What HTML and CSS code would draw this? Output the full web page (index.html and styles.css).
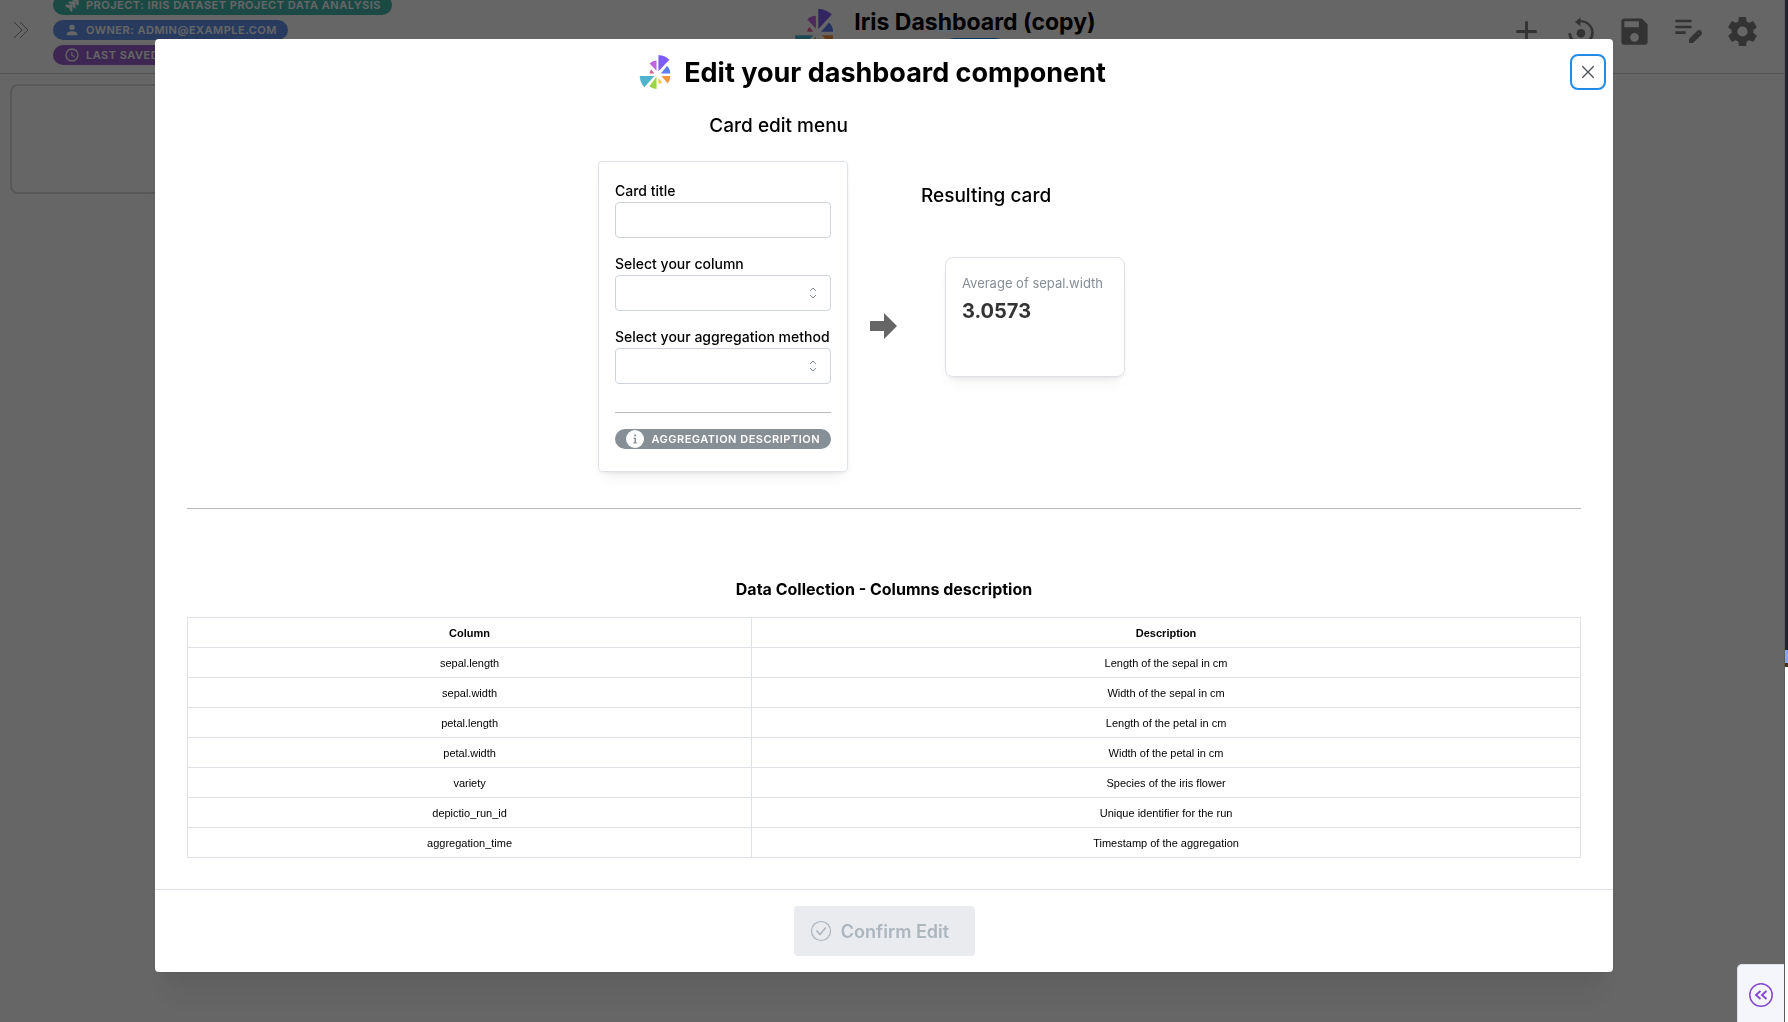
FILE: index.html
```html
<!DOCTYPE html>
<html lang="en">
<head>
<meta charset="utf-8">
<meta name="viewport" content="width=device-width, initial-scale=1">
<title>Iris Dashboard (copy)</title>
<link rel="stylesheet" href="styles.css">
</head>
<body>
<svg class="defs" aria-hidden="true">
  <symbol id="logo" viewBox="106 44 97 107">
    <path fill="#7f5df5" d="M165 95V46Q184 47 198 60Z"/>
    <path fill="#5f7ef6" d="M172 102 191 79Q201 88 201 102Z"/>
    <path fill="#f3953f" d="M174 110H201Q201 123 193 132Z"/>
    <path fill="#f8c63d" d="M165 116 176 129Q171 133 165 133Z"/>
    <path fill="#9dd447" d="M159 112V149Q147 149 137 141Z"/>
    <path fill="#52b4cc" d="M153 110H108Q109 130 122 144Z"/>
    <path fill="#dc6292" d="M153 102H138Q138 95 143 90Z"/>
    <path fill="#c064e0" d="M159 94V63Q147 63 138 72Z"/>
  </symbol>
</svg>

<div class="window">
  <div class="app">
    <header class="topbar">
      <button class="icon-btn expand" aria-label="Expand sidebar">
        <svg width="24" height="24" viewBox="0 0 24 24" fill="none" stroke="#868e96" stroke-width="1"><path d="M5 4l8 8-8 8M11 4l8 8-8 8"/></svg>
      </button>
      <div class="tags">
        <span class="badge teal"><svg viewBox="0 0 24 24" fill="currentColor"><path d="M11.5 2c0 2.4 2 4.400 4.350 4.400h1.780v1.700c0 2.400 1.940 4.340 4.340 4.350V2.840a.84.84 0 0 0-.84-.84H11.500M6.770 6.800c0 2.400 1.960 4.350 4.350 4.350h1.780v1.720c0 2.400 1.950 4.340 4.350 4.340V7.630a.84.84 0 0 0-.83-.83H6.770M2 11.600c0 2.400 1.950 4.340 4.350 4.340h1.780v1.720c.01 2.390 1.950 4.330 4.340 4.340v-9.570a.84.84 0 0 0-.84-.83H2Z"/></svg>Project: Iris Dataset Project Data Analysis</span>
        <span class="badge blue"><svg viewBox="0 0 24 24" fill="currentColor"><path d="M12 4a4 4 0 0 1 4 4 4 4 0 0 1-4 4 4 4 0 0 1-4-4 4 4 0 0 1 4-4m0 10c4.420 0 8 1.790 8 4v2H4v-2c0-2.210 3.580-4 8-4Z"/></svg>Owner: admin@example.com</span>
        <span class="badge purple"><svg viewBox="0 0 24 24" fill="none" stroke="currentColor" stroke-width="2"><circle cx="12" cy="12" r="9"/><path d="M11.700 7v5.500l4.500 2.300" stroke-width="1.600"/></svg>Last saved: 2025-06-12 14:30</span>
      </div>
      <div class="heading">
        <svg class="heading-logo" viewBox="0 0 97 107"><use href="#logo"/></svg>
        <div class="heading-text">
          <h1>Iris Dashboard (copy)</h1>
          <span class="badge status"></span>
        </div>
      </div>
      <nav class="actions">
        <button class="icon-btn" aria-label="Add component"><svg viewBox="0 0 24 24"><path d="M19 13h-6v6h-2v-6H5v-2h6V5h2v6h6v2Z"/></svg></button>
        <button class="icon-btn" aria-label="Reset"><svg viewBox="0 0 24 24"><path d="M12 5.700V8.400L8.200 5.400 12 2.400V4.300A8.700 8.700 0 1 1 3.700 13H5.500A6.900 6.900 0 1 0 12 5.700Z"/><circle cx="12.300" cy="13.200" r="3"/></svg></button>
        <button class="icon-btn" aria-label="Save"><svg viewBox="0 0 24 24"><path d="M15 9H5V5h10m-3 14a3 3 0 0 1-3-3 3 3 0 0 1 3-3 3 3 0 0 1 3 3 3 3 0 0 1-3 3m5-16H5c-1.110 0-2 .9-2 2v14a2 2 0 0 0 2 2h14a2 2 0 0 0 2-2V7l-4-4Z"/></svg></button>
        <button class="icon-btn" aria-label="Edit notes"><svg viewBox="575 45 105 105"><path d="M588 62h49v8h-49zM588 80h49v8h-49zM588 97h31v8h-31z"/><path fill-rule="evenodd" d="M629 132V120L653 96Q659 90 665 96L667 98Q670 103 666 107L641 132ZM656 103l2 2 2-2-2-2Z"/></svg></button>
        <button class="icon-btn" aria-label="Settings"><svg viewBox="0 0 24 24"><path d="M12 15.500A3.500 3.500 0 0 1 8.500 12 3.500 3.500 0 0 1 12 8.500a3.500 3.500 0 0 1 3.500 3.500 3.500 3.500 0 0 1-3.500 3.500m7.430-2.530c.04-.32.07-.64.07-.97 0-.33-.03-.66-.07-1l2.110-1.630c.19-.15.24-.42.12-.64l-2-3.460c-.12-.22-.39-.31-.61-.22l-2.490 1c-.52-.39-1.060-.73-1.690-.98l-.37-2.650A.506.506 0 0 0 14 2h-4c-.25 0-.46.18-.5.42l-.37 2.650c-.63.25-1.170.59-1.690.98l-2.490-1c-.22-.09-.49 0-.61.22l-2 3.460c-.13.22-.07.49.12.64L4.570 11c-.04.34-.07.67-.07 1 0 .33.03.65.07.97l-2.110 1.660c-.19.15-.25.42-.12.64l2 3.460c.12.22.39.3.61.22l2.490-1.010c.52.4 1.060.74 1.690.99l.37 2.650c.04.24.25.42.5.42h4c.25 0 .46-.18.5-.42l.37-2.650c.63-.26 1.170-.59 1.690-.99l2.490 1.010c.22.08.49 0 .61-.22l2-3.460c.12-.22.07-.49-.12-.64l-2.110-1.660Z"/></svg></button>
      </nav>
    </header>
    <main class="board"><div class="tile"></div></main>
  </div>
  <div class="edge"></div>
</div>

<div class="overlay">
  <section class="modal" role="dialog" aria-modal="true" aria-labelledby="modal-title">
    <header class="modal-head">
      <div class="modal-title">
        <svg class="modal-logo" viewBox="0 0 97 107"><use href="#logo"/></svg>
        <h2 id="modal-title">Edit your dashboard component</h2>
      </div>
      <button class="close" aria-label="Close"><svg width="16" height="16" viewBox="0 0 16 16" fill="none" stroke="#495057" stroke-width="1.300"><path d="M2.300 2.300l11.400 11.400M13.700 2.300L2.300 13.700"/></svg></button>
    </header>

    <div class="modal-body">
      <div class="editor">
        <div class="menu">
          <h3>Card edit menu</h3>
          <form class="panel">
            <div class="field">
              <label for="card-title">Card title</label>
              <input id="card-title" type="text">
            </div>
            <div class="field">
              <label for="card-column">Select your column</label>
              <div class="select">
                <select id="card-column"><option></option><option>sepal.length</option><option>sepal.width</option></select>
                <svg viewBox="0 0 12 16"><path d="M3 6l3-3 3 3M3 10l3 3 3-3"/></svg>
              </div>
            </div>
            <div class="field">
              <label for="card-method">Select your aggregation method</label>
              <div class="select">
                <select id="card-method"><option></option><option>average</option><option>count</option></select>
                <svg viewBox="0 0 12 16"><path d="M3 6l3-3 3 3M3 10l3 3 3-3"/></svg>
              </div>
            </div>
            <hr>
            <span class="badge gray"><svg viewBox="0 0 18 18"><circle cx="9" cy="9" r="9" fill="#fff"/><path d="M8.200 4.500h1.800v1.800H8.200zM7.500 7.800H10v4.700h1v1H7.300v-1h1.200V8.800h-1z" fill="#868e96"/></svg>Aggregation description</span>
          </form>
        </div>
        <svg class="arrow" viewBox="0 0 27 26" fill="#666"><path d="M0 8h14V0l13 13-13 13v-8H0z"/></svg>
        <div class="result">
          <h3>Resulting card</h3>
          <div class="stat">
            <span class="stat-label">Average of sepal.width</span>
            <strong>3.0573</strong>
          </div>
        </div>
      </div>

      <hr class="divider">

      <h4 id="columns-title">Data Collection - Columns description</h4>
      <table aria-labelledby="columns-title">
        <thead><tr><th class="name">Column</th><th>Description</th></tr></thead>
        <tbody>
          <tr><td>sepal.length</td><td>Length of the sepal in cm</td></tr>
          <tr><td>sepal.width</td><td>Width of the sepal in cm</td></tr>
          <tr><td>petal.length</td><td>Length of the petal in cm</td></tr>
          <tr><td>petal.width</td><td>Width of the petal in cm</td></tr>
          <tr><td>variety</td><td>Species of the iris flower</td></tr>
          <tr><td>depictio_run_id</td><td>Unique identifier for the run</td></tr>
          <tr><td>aggregation_time</td><td>Timestamp of the aggregation</td></tr>
        </tbody>
      </table>
    </div>

    <footer class="modal-foot">
      <button class="confirm" disabled>
        <svg width="22" height="22" viewBox="0 0 22 22" fill="none" stroke="currentColor"><circle cx="11" cy="11" r="9.500" stroke-width="1.200"/><path d="M6.500 10.500l3.500 4 5.800-7" stroke-width="1.600"/></svg>
        Confirm Edit
      </button>
    </footer>
  </section>
</div>

<button class="drawer" aria-label="Open debug menu">
  <svg width="24" height="24" viewBox="0 0 24 24" fill="none" stroke="#8549cc"><circle cx="12" cy="12" r="11.200" stroke-width="1.500"/><path d="M11.500 8l-4.500 4 4.500 4M17.500 8L13 12l4.500 4" stroke-width="1.900"/></svg>
</button>
</body>
</html>
```
FILE: styles.css
```css
* { box-sizing: border-box; }

body {
  margin: 0;
  font-family: Inter, "Liberation Sans", sans-serif;
  color: #000;
  background: #fff;
}

button, input, select { font: inherit; }
h1, h2, h3, h4 { margin: 0; }
.defs { display: none; }

/* Page behind the dialog */
.window { display: flex; height: 100vh; overflow: hidden; }
.app { flex: 1; min-width: 0; }
.edge {
  position: relative;
  z-index: 3;
  width: 4px;
  border-left: 1px solid #5c5c5c;
  background: linear-gradient(#22252f 650px, #8ca4f0 650px 663px, #4a3218 663px 667px, #fff 667px);
}

.topbar {
  display: grid;
  grid-template-columns: 53px 1fr auto 1fr;
  align-items: center;
  height: 74px;
  padding-bottom: 13px;
  border-bottom: 1px solid #d0d3d8;
}
.topbar > * { max-height: 60px; }
.icon-btn {
  display: flex;
  padding: 0;
  border: 0;
  background: none;
}
.expand { padding-left: 9px; }

.tags {
  display: flex;
  flex-direction: column;
  justify-content: center;
  align-items: flex-start;
  gap: 5px;
}
.badge {
  display: inline-flex;
  flex: none;
  align-items: center;
  gap: 6px;
  height: 20px;
  padding: 0 11px;
  border-radius: 10px;
  color: #fff;
  font-size: 11px;
  font-weight: 600;
  letter-spacing: 0.5px;
  text-transform: uppercase;
  white-space: nowrap;
}
.badge svg { width: 16px; height: 16px; }
.teal { background: #45b8ac; }
.blue { background: #6495ed; }
.purple { background: #9b5fd0; }
.gray { background: #868e96; }
.status { width: 62px; background: #228be6; }

.heading { display: flex; align-items: flex-start; gap: 20px; margin-left: 53px; }
.heading-logo { width: 40px; height: 44px; margin-top: 5px; }
.heading-text { display: flex; flex-direction: column; align-items: center; padding-top: 3px; }
.heading-text h1 { font-size: 23px; line-height: 32px; }

.actions {
  display: flex;
  justify-content: flex-end;
  gap: 19px;
  padding: 3px 24px 0 0;
}
.actions svg { width: 35px; height: 35px; fill: #808080; }

.board { padding: 10px; }
.tile { width: 50%; height: 110px; border: 2px solid #dcdcdc; border-radius: 8px; }

/* Dialog */
.overlay {
  position: fixed;
  inset: 0 4px 0 0;
  z-index: 2;
  display: flex;
  justify-content: center;
  align-items: flex-start;
  padding: 39px 32px 39px 16px;
  background: rgba(0, 0, 0, 0.6);
}
.modal {
  flex: 0 1 1458px;
  border-radius: 4px;
  background: #fff;
  box-shadow: 0 1px 3px rgba(0, 0, 0, 0.05), 0 36px 28px -7px rgba(0, 0, 0, 0.05), 0 17px 17px -7px rgba(0, 0, 0, 0.04);
}
.modal-head {
  display: flex;
  align-items: center;
  padding: 15px 11px 0 16px;
}
.modal-title { flex: 1; display: flex; justify-content: center; align-items: center; gap: 13px; }
.modal-logo { width: 32px; height: 36px; }
.modal-title h2 { padding-top: 2px; font-size: 27px; line-height: 34px; }
.close {
  display: flex;
  justify-content: center;
  align-items: center;
  width: 28px;
  height: 28px;
  padding: 0;
  border: 0;
  border-radius: 4px;
  background: #fff;
  outline: 2px solid #228be6;
  outline-offset: 2px;
}

.modal-body { padding: 20px 32px 31px; }
.editor { display: flex; justify-content: center; align-items: flex-start; }
h3 { font-size: 19px; font-weight: 500; line-height: 32px; white-space: nowrap; }

.menu { width: 250px; }
.menu h3 { text-align: right; }
.panel {
  display: flex;
  flex-direction: column;
  margin-top: 19px;
  padding: 17px 16px 22px;
  border: 1px solid #dee2e6;
  border-radius: 4px;
  box-shadow: 0 1px 3px rgba(0, 0, 0, 0.05), 0 10px 15px -5px rgba(0, 0, 0, 0.05), 0 7px 7px -5px rgba(0, 0, 0, 0.04);
}
.field { margin-bottom: 14px; }
.field label { display: block; font-size: 14px; font-weight: 500; line-height: 23px; white-space: nowrap; }
.field input, .field select {
  display: block;
  width: 100%;
  height: 36px;
  padding: 0 12px;
  border: 1px solid #ced4da;
  border-radius: 4px;
  background: #fff;
  appearance: none;
}
.select { display: grid; align-items: center; }
.select > * { grid-area: 1 / 1; }
.select svg {
  justify-self: end;
  width: 12px;
  height: 16px;
  margin-right: 12px;
  fill: none;
  stroke: #868e96;
  pointer-events: none;
}
hr { width: 100%; margin: 0; border: 0; border-top: 1px solid #b8babd; }
.panel hr { margin: 14px 0 16px; }
.panel .badge { justify-content: space-between; }
.panel .badge svg { width: 18px; height: 18px; }

.arrow { width: 27px; height: 26px; margin: 203px 24px 0 22px; }
.result { width: 249px; padding-top: 70px; }
.stat {
  display: flex;
  flex-direction: column;
  width: 180px;
  height: 120px;
  margin: 45px 0 0 24px;
  padding: 14px 16px;
  border: 1px solid #dee2e6;
  border-radius: 8px;
  box-shadow: 0 1px 3px rgba(0, 0, 0, 0.05), 0 10px 15px -5px rgba(0, 0, 0, 0.05), 0 7px 7px -5px rgba(0, 0, 0, 0.04);
}
.stat-label { color: #868e96; font-size: 13px; line-height: 23px; white-space: nowrap; }
.stat strong { color: #333; font-size: 20px; line-height: 32px; }

.divider { margin: 36px 0 68px; }
h4 { font-size: 16px; line-height: 24px; text-align: center; }
table {
  width: 100%;
  margin-top: 16px;
  border-collapse: collapse;
  table-layout: fixed;
  font-family: "Liberation Sans", Arial, sans-serif;
  font-size: 11px;
}
th, td { height: 30px; padding: 0; border: 1px solid #dee2e6; text-align: center; }
.name { width: 40.5%; }

.modal-foot {
  display: flex;
  justify-content: center;
  padding: 16px;
  border-top: 1px solid #dee2e6;
}
.confirm {
  display: flex;
  justify-content: center;
  align-items: center;
  gap: 9px;
  width: 181px;
  height: 50px;
  padding: 0 9px 0 0;
  border: 0;
  border-radius: 4px;
  background: #e9ebef;
  color: #adb5bd;
  font-size: 18px;
  font-weight: 600;
  white-space: nowrap;
}

.drawer {
  position: fixed;
  right: 4px;
  bottom: 0;
  z-index: 4;
  display: flex;
  justify-content: center;
  width: 47px;
  height: 58px;
  padding: 18px 0 0;
  border: 1px solid #dcdfe8;
  border-width: 1px 0 0 1px;
  border-radius: 5px 0 0 0;
  background: #f5f6fb;
}
```
